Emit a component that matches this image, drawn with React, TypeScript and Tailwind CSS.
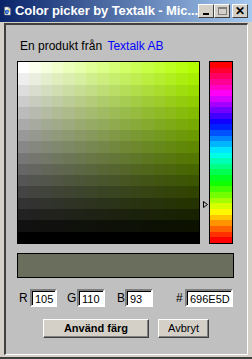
import React from 'react';

const HUE = 78;
const STEPS = 16;
const HUE_STEPS = 32;

// hsv -> css rgb
const hsv = (h: number, s: number, v: number) => {
    const f = (n: number) => {
        const k = (n + h / 60) % 6;
        return v - v * s * Math.max(0, Math.min(k, 4 - k, 1));
    };
    return `rgb(${Math.round(f(5) * 255)},${Math.round(f(3) * 255)},${Math.round(f(1) * 255)})`;
};

const IeIcon = () => (
    <svg width="16" height="16" viewBox="0 0 16 16">
        <path d="M3 1h7l3 3v11H3z" fill="#fff" stroke="#808080" strokeWidth="1" />
        <path d="M10 1v3h3" fill="none" stroke="#808080" />
        <ellipse cx="7" cy="9" rx="5.5" ry="2.2" fill="none" stroke="#f2c200" strokeWidth="1" transform="rotate(-30 7 9)" />
        <path d="M4 9.5h6a3 3 0 1 0-.8 2.2" fill="none" stroke="#1a5fd6" strokeWidth="2" />
    </svg>
);

const TitleButton: React.FC<{ children: React.ReactNode; disabled?: boolean }> = ({ children, disabled }) => (
    <div className={`w-[16px] h-[14px] bg-[#d4d0c8] border border-t-white border-l-white border-r-[#404040] border-b-[#404040] flex items-center justify-center ${disabled ? 'text-[#808080]' : 'text-black'}`}>
        {children}
    </div>
);

const Field: React.FC<{ label: string; value: string; labelW: string; w: string; ml: string }> = ({ label, value, labelW, w, ml }) => (
    <div className={`flex items-center ${ml}`}>
        <span className={`${labelW} text-[12px] text-black`}>{label}</span>
        <div className={`${w} h-[18px] border-2 border-t-[#808080] border-l-[#808080] border-r-white border-b-white`}>
            <div className="h-full bg-white border-t border-l border-black pl-[2px] text-[11px] leading-[15px] text-black overflow-hidden whitespace-nowrap">{value}</div>
        </div>
    </div>
);

export default function App() {
    return (
        <div className="w-[252px] h-[359px] bg-[#d4d0c8] flex flex-col overflow-hidden" style={{ fontFamily: '"Liberation Sans", Arial, sans-serif' }}>
            {/* title bar */}
            <div className="h-[22px] shrink-0 flex items-center pl-[3px] pr-[4px] bg-[linear-gradient(to_right,#0a246a,#a6caf0)]">
                <IeIcon />
                <span className="ml-[3px] text-white font-bold text-[13px] whitespace-nowrap tracking-[-0.1px]">Color picker by Textalk - Mic...</span>
                <div className="ml-auto flex items-center">
                    <TitleButton>
                        <div className="w-[6px] h-[2px] bg-black mt-[6px]" />
                    </TitleButton>
                    <TitleButton disabled>
                        <div className="w-[9px] h-[8px] border border-t-2 border-[#808080]" />
                    </TitleButton>
                    <div className="w-[2px]" />
                    <TitleButton>
                        <span className="text-[12px] font-bold leading-none">✕</span>
                    </TitleButton>
                </div>
            </div>

            {/* window body */}
            <div className="flex-1 flex flex-col px-[4px] pt-[1px] pb-[2px] border-b-2 border-[#404040]">
                <div className="flex-1 bg-[#c0c0c0] border-t-2 border-l-2 border-t-[#404040] border-l-[#404040] border-r border-b border-r-white border-b-white flex flex-col pl-[11px] pt-[14px]">
                    <p className="text-[12px] leading-[14px] text-black pl-[3px]">
                        En produkt från <span className="text-[#0000ff] ml-[2px]">Textalk AB</span>
                    </p>

                    <div className="flex mt-[8px]">
                        <div className="w-[183px] h-[183px] border border-black flex flex-col">
                            {Array.from({ length: STEPS }).map((_, r) => (
                                <div key={r} className="flex-1 flex">
                                    {Array.from({ length: STEPS }).map((_, c) => (
                                        <div key={c} className="flex-1" style={{ background: hsv(HUE, c / (STEPS - 1), 1 - r / (STEPS - 1)) }} />
                                    ))}
                                </div>
                            ))}
                        </div>
                        <div className="relative ml-[9px] w-[24px] h-[183px] border border-black flex flex-col">
                            {Array.from({ length: HUE_STEPS }).map((_, i) => (
                                <div key={i} className="flex-1" style={{ background: hsv(360 - (i * 360) / (HUE_STEPS - 1), 1, 1) }} />
                            ))}
                            <svg className="absolute left-[-7px] top-[139px]" width="6" height="7" viewBox="0 0 6 7">
                                <path d="M0.5 0.5v6M0.5 0.5l4 3-4 3" fill="none" stroke="#000" strokeWidth="1" />
                            </svg>
                        </div>
                    </div>

                    <div className="mt-[9px] w-[217px] h-[25px] border border-black bg-[#696e5d]" />

                    <div className="flex items-center mt-[11px] pl-[2px]">
                        <Field label="R" value="105" labelW="w-[11px]" w="w-[27px]" ml="" />
                        <Field label="G" value="110" labelW="w-[10px]" w="w-[28px]" ml="ml-[10px]" />
                        <Field label="B" value="93" labelW="w-[8px]" w="w-[28px]" ml="ml-[12px]" />
                        <Field label="#" value="696E5D" labelW="w-[9px]" w="w-[48px]" ml="ml-[23px]" />
                    </div>

                    <div className="flex mt-[12px] pl-[26px] gap-[9px]">
                        <button className="w-[106px] h-[19px] bg-[#d4d0c8] border border-t-white border-l-white border-r-[#404040] border-b-[#404040] shadow-[inset_-1px_-1px_0_#808080] text-[11px] font-bold text-black">
                            Använd färg
                        </button>
                        <button className="w-[51px] h-[19px] bg-[#d4d0c8] border border-t-white border-l-white border-r-[#404040] border-b-[#404040] shadow-[inset_-1px_-1px_0_#808080] text-[11px] text-black">
                            Avbryt
                        </button>
                    </div>
                </div>
            </div>
        </div>
    );
}
